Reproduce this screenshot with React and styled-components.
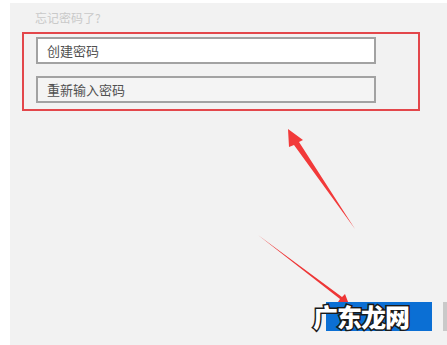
import React from "react";
import styled, { createGlobalStyle } from "styled-components";

const Global = createGlobalStyle`
  html, body {
    margin: 0;
    padding: 0;
    background: #ffffff;
  }
  body {
    font-family: "Noto Sans CJK SC", "Noto Sans", sans-serif;
  }
`;

const Page = styled.div`
  position: relative;
  width: 447px;
  height: 345px;
  overflow: hidden;
  padding: 3px 0 0 10px;
  box-sizing: border-box;
`;

const Panel = styled.section`
  background: #f2f2f2;
  height: 342px;
  padding: 6px 0 0 12px;
  box-sizing: border-box;
`;

const Hint = styled.div`
  margin-left: 13px;
  font-size: 12px;
  line-height: 17px;
  color: #c9c9c9;
  height: 23px;
`;

const Highlight = styled.div`
  width: 398px;
  height: 79px;
  box-sizing: border-box;
  border: 2px solid #e3474b;
  padding: 3px 0 0 12px;
  display: flex;
  flex-direction: column;
  gap: 12px;
`;

const Field = styled.div`
  width: 340px;
  height: 27px;
  box-sizing: border-box;
  border: 2px solid #a2a2a2;
  background: ${(p) => (p.$filled ? "#ffffff" : "#f4f4f4")};
  display: flex;
  align-items: center;
  padding-left: 9px;
  font-size: 13px;
  color: #505050;
`;

const Overlay = styled.svg`
  position: absolute;
  left: 0;
  top: 0;
  pointer-events: none;
`;

/* site watermark stamped over the bottom right corner */
const Stamp = styled.div`
  position: absolute;
  left: 326px;
  top: 302px;
  display: flex;
  gap: 11px;
`;

const StampBox = styled.div`
  width: 106px;
  height: 29px;
  background: #0b6fd4;
  display: flex;
  align-items: center;
`;

const StampText = styled.span`
  margin-left: -13px;
  font-family: "Noto Sans CJK SC", sans-serif;
  font-weight: 900;
  font-size: 25px;
  line-height: 29px;
  letter-spacing: -1px;
  white-space: nowrap;
  color: #ffffff;
  -webkit-text-stroke: 3px #1a1a1a;
  paint-order: stroke fill;
`;

const StampEdge = styled.div`
  width: 4px;
  height: 29px;
  background: #c9c9c9;
`;

export default function App() {
  return (
    <Page>
      <Global />
      <Panel>
        <Hint>忘记密码了?</Hint>
        <Highlight>
          <Field $filled>创建密码</Field>
          <Field>重新输入密码</Field>
        </Highlight>
      </Panel>
      <Overlay width="447" height="345" viewBox="0 0 447 345">
        <polygon
          points="288,129 303,140 299,142 355,229 294,145 289,147"
          fill="#f23a3a"
        />
        <polygon
          points="258,235 342,297 345,294 350,307 338,302 340,299"
          fill="#ee3636"
        />
      </Overlay>
      <Stamp>
        <StampBox>
          <StampText>广东龙网</StampText>
        </StampBox>
        <StampEdge />
      </Stamp>
    </Page>
  );
}
